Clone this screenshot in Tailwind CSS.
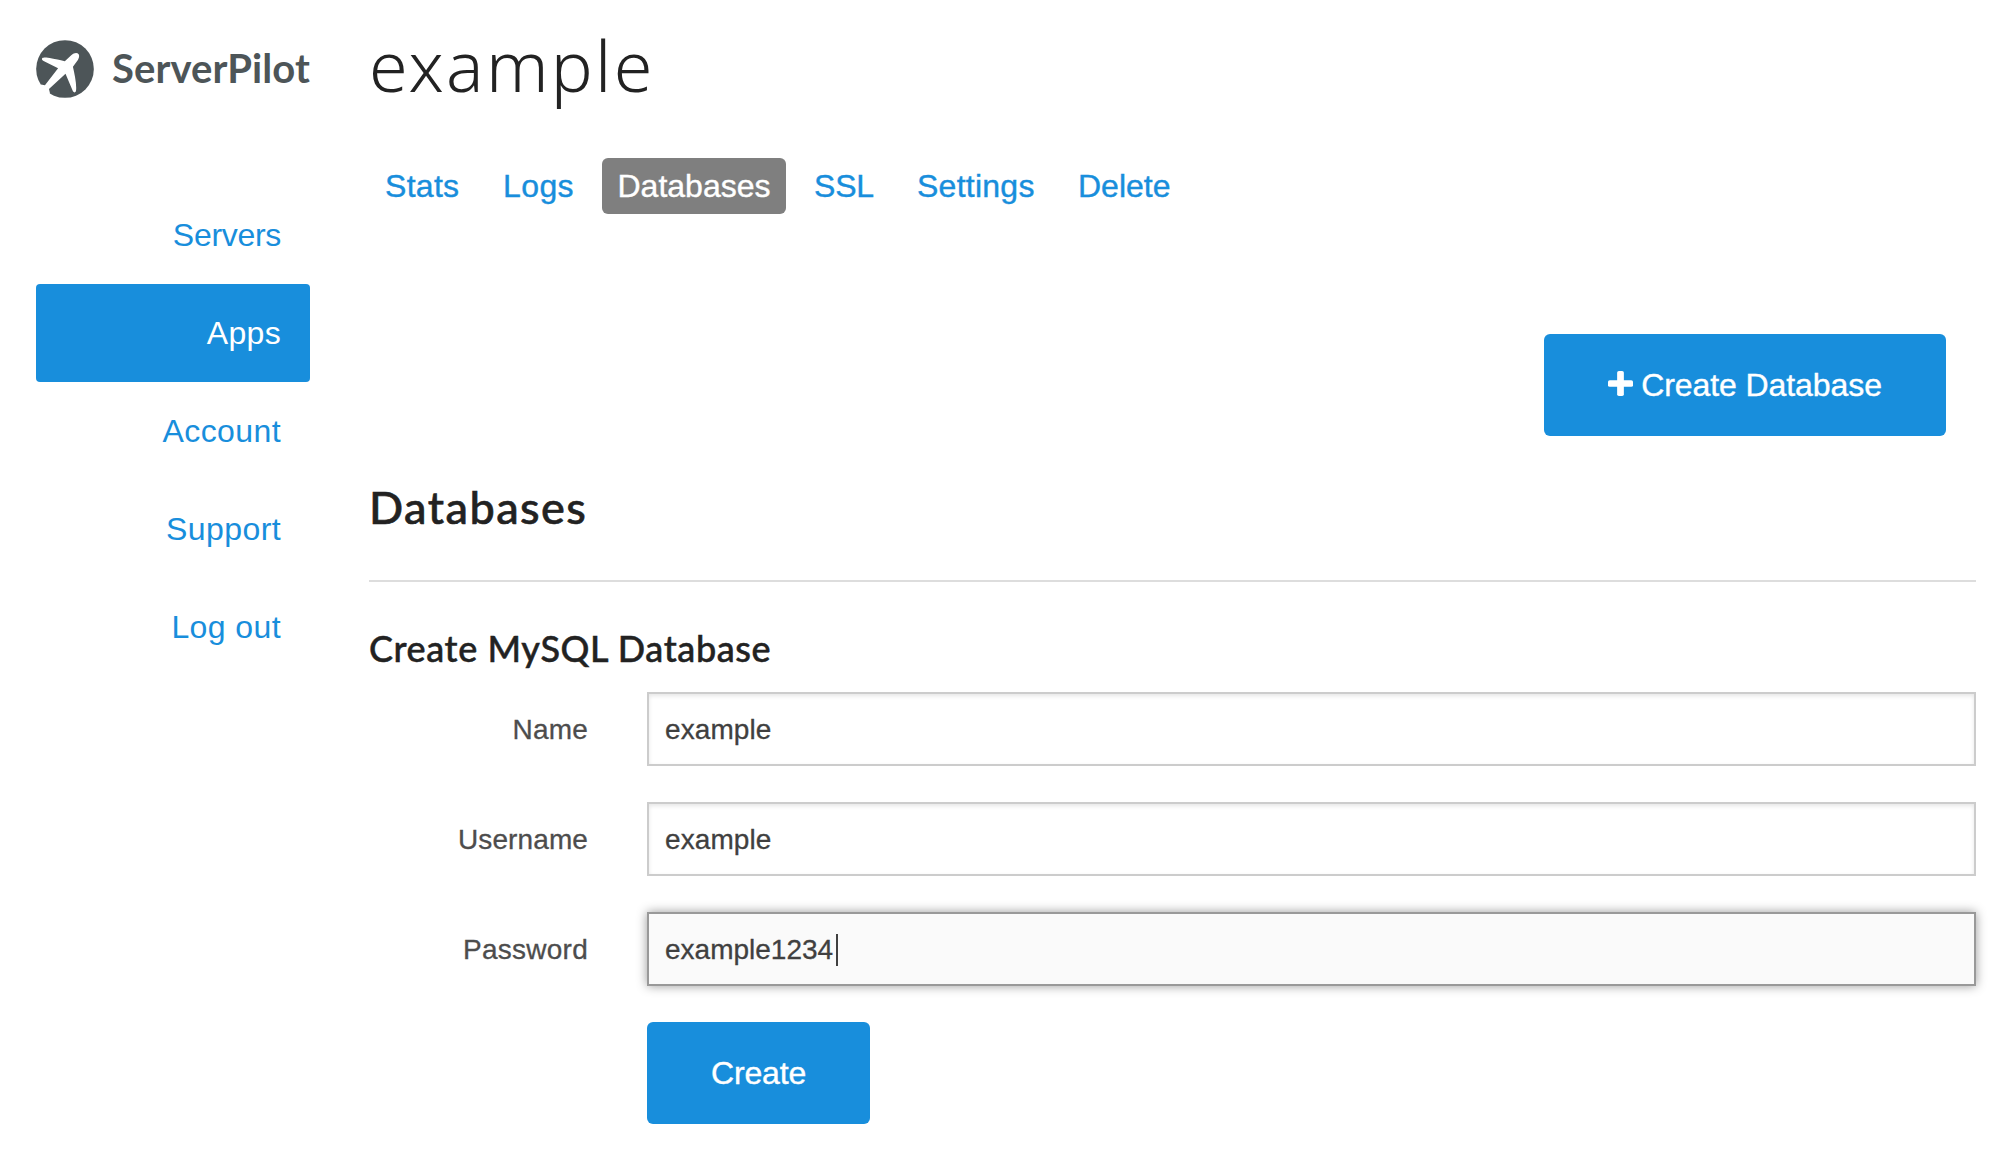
<!DOCTYPE html>
<html lang="en">
<head>
<meta charset="utf-8">
<title>ServerPilot</title>
<script src="https://cdn.jsdelivr.net/npm/@tailwindcss/browser@4"></script>
</head>
<body class="bg-white font-['Liberation_Sans',sans-serif] text-[#222] antialiased">
<div class="flex h-[1162px] w-[2016px] overflow-hidden pl-9">
  <aside class="w-[274px] shrink-0 pt-10">
    <a class="flex h-[58px] items-center text-[#4d5558]" href="#">
      <svg class="size-[58px] shrink-0" viewBox="0 0 171 172">
        <circle cx="85.500" cy="86" r="85.500" fill="currentColor"/>
        <path fill="#fff" d="M18 54 C24 50 38 52 85 63 L104 45 C113 37 122 37 126 42 C129 47 127 56 121 63 L109 79 C114 101 121 133 118 152 C116 156 112 157 109 152 L87 100 L38 145 L41 158 L24 180 L-6 150 L14 132 L26 134 L65 84 L22 62 C17 59 16 56 18 54Z"/>
      </svg>
      <span class="-mt-0.5 ml-[18px] font-['Lato',sans-serif] text-[40px] leading-none font-bold tracking-[0.1px]">ServerPilot</span>
    </a>
    <nav class="mt-[88px] flex flex-col text-right text-[32px] leading-[98px] text-[#188edc]">
      <a class="pr-[29px] tracking-[-0.3px]" href="#">Servers</a>
      <a class="rounded bg-[#188edc] pr-[29px] tracking-[0.3px] text-white" href="#">Apps</a>
      <a class="pr-[29px] tracking-[0.4px]" href="#">Account</a>
      <a class="pr-[29px] tracking-[0.4px]" href="#">Support</a>
      <a class="pr-[29px] tracking-[0.4px]" href="#">Log out</a>
    </nav>
  </aside>
  <main class="ml-[59px] w-[1607px] shrink-0">
    <h1 class="h-[158px] pt-[25px] font-['Noto_Sans',sans-serif] text-[70px] leading-[80px] font-light tracking-[2.3px]">example</h1>
    <nav class="flex h-14 text-[32px] leading-[57px] text-[#188edc] [-webkit-text-stroke:0.4px]">
      <a class="w-[118px] pl-4 tracking-[0.3px]" href="#">Stats</a>
      <a class="w-[115px] pl-4 tracking-[0.4px]" href="#">Logs</a>
      <a class="w-[184px] rounded-md bg-[#7f7f7f] text-center text-white" href="#">Databases</a>
      <a class="ml-3 w-[103px] pl-4 tracking-[-0.2px]" href="#">SSL</a>
      <a class="w-[161px] pl-4 tracking-[0.25px]" href="#">Settings</a>
      <a class="pl-4" href="#">Delete</a>
    </nav>
    <div class="mt-[120px] flex justify-end pr-[30px]">
      <button class="flex h-[102px] w-[402px] items-center justify-center rounded-md bg-[#188edc] text-[32px] tracking-[-0.08px] text-white [-webkit-text-stroke:0.4px]">
        <svg class="mr-2 mb-[4px] size-[25px]" viewBox="0 0 26 26" fill="currentColor"><rect x="9.500" width="7" height="26" rx="1.800"/><rect y="9.500" width="26" height="7" rx="1.800"/></svg>
        <span>Create Database</span>
      </button>
    </div>
    <h2 class="h-[144px] pt-[44px] font-['Lato',sans-serif] text-[45px] leading-[54px] font-medium tracking-[1.45px] [-webkit-text-stroke:0.6px]">Databases</h2>
    <hr class="border-t-2 border-[#ddd]">
    <h3 class="h-[110px] pt-[44px] font-['Lato',sans-serif] text-[36px] leading-[44px] font-medium tracking-[0.6px] [-webkit-text-stroke:0.5px]">Create MySQL Database</h3>
    <form class="grid grid-cols-[218px_1fr] items-center gap-x-[60px] gap-y-9 text-[28px] leading-8 text-[#4d4d4d] [-webkit-text-stroke:0.3px]">
      <label class="-mr-px pt-0.5 text-right tracking-[0.2px]">Name</label>
      <div class="flex h-[74px] items-center border-2 border-[#ccc] bg-white px-4 pt-0.5 tracking-[0.1px] text-[#404040] shadow-[inset_0_2px_4px_rgba(0,0,0,0.1)]">example</div>
      <label class="-mr-px pt-0.5 text-right tracking-[0.1px]">Username</label>
      <div class="flex h-[74px] items-center border-2 border-[#ccc] bg-white px-4 pt-0.5 tracking-[0.1px] text-[#404040] shadow-[inset_0_2px_4px_rgba(0,0,0,0.1)]">example</div>
      <label class="-mr-px pt-0.5 text-right tracking-[0.25px]">Password</label>
      <div class="flex h-[74px] items-center border-2 border-[#999] bg-[#fafafa] px-4 pt-0.5 text-[#404040] shadow-[0_0_10px_#999]">example1234<span class="ml-[3px] h-8 w-[2px] bg-[#404040]"></span></div>
      <button type="button" class="col-start-2 h-[102px] w-[223px] rounded-md bg-[#188edc] text-[32px] tracking-[-0.15px] text-white [-webkit-text-stroke:0.4px]">Create</button>
    </form>
  </main>
</div>
</body>
</html>
